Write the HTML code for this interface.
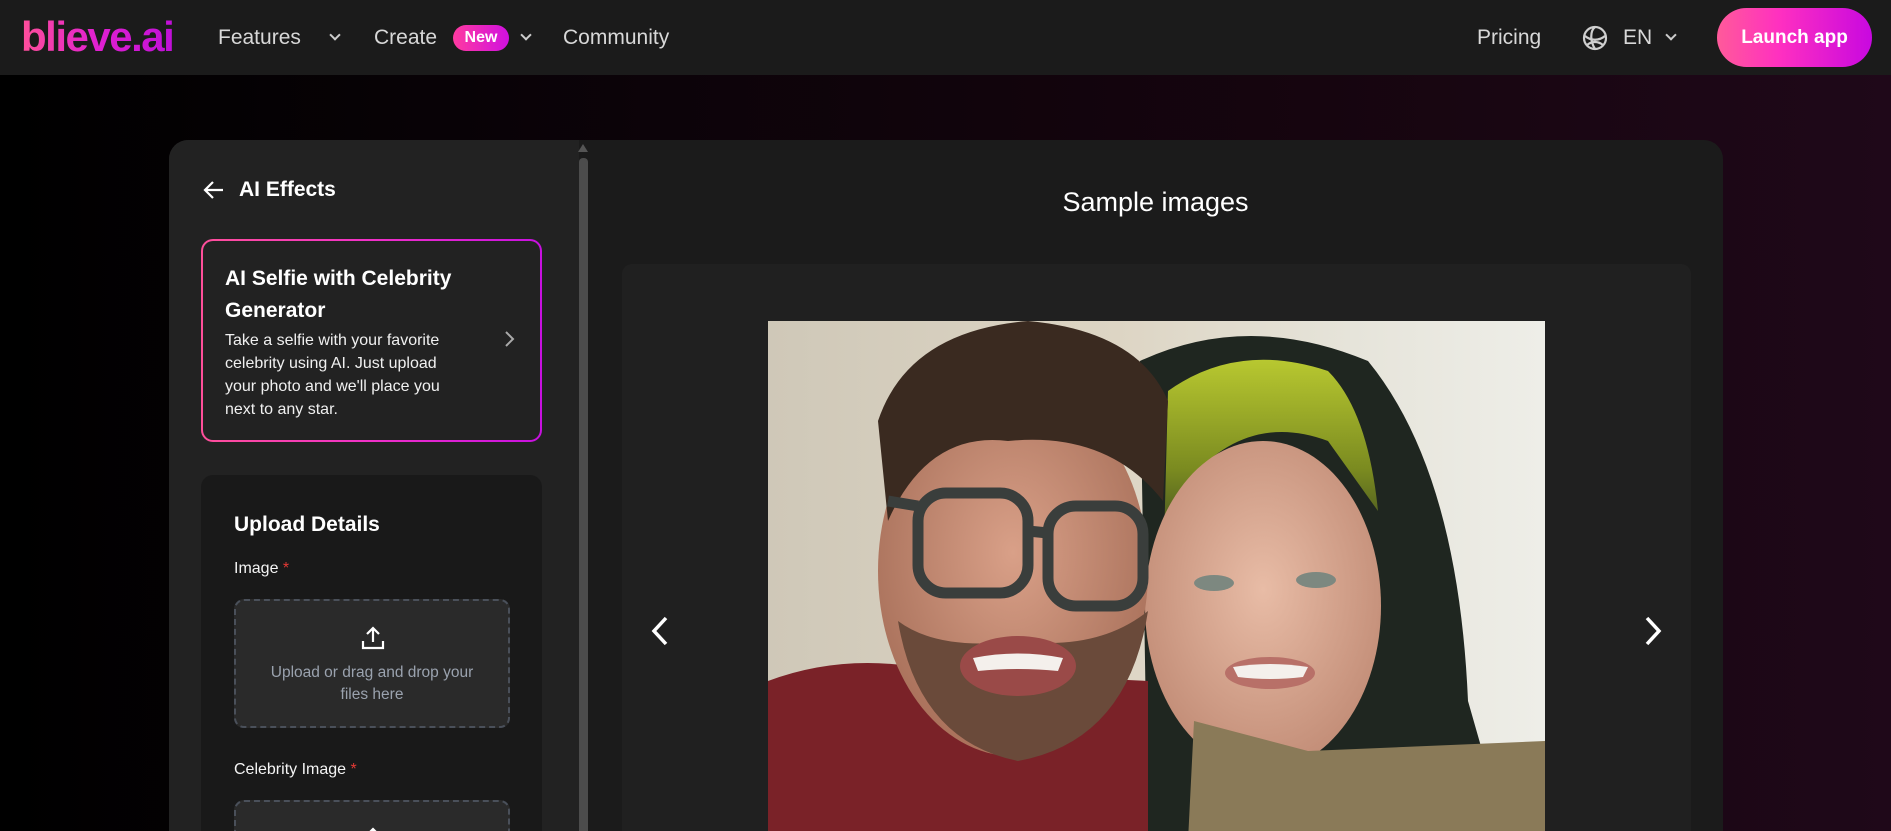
<!DOCTYPE html>
<html><head><meta charset="utf-8"><style>
*{margin:0;padding:0;box-sizing:border-box}
html,body{width:1891px;height:831px;overflow:hidden}
body{font-family:"Liberation Sans",sans-serif;background:linear-gradient(90deg,#000 0%,#0c0309 35%,#16050f 70%,#1f0819 100%);position:relative;color:#fff}
.nav{position:absolute;left:0;top:0;width:1891px;height:75px;background:#1b1b1b}
.logo{position:absolute;left:21px;top:13px;font-size:42px;font-weight:bold;letter-spacing:-1.5px;background:linear-gradient(90deg,#ff4f9a,#e020d0,#c010d8);-webkit-background-clip:text;color:transparent}
.ni{position:absolute;top:26px;font-size:21px;color:#d8d8d8}
.chev{position:absolute;width:8px;height:8px;border-right:2px solid #ccc;border-bottom:2px solid #ccc;transform:rotate(45deg)}
.new{position:absolute;left:453px;top:25px;width:56px;height:26px;border-radius:13px;background:linear-gradient(90deg,#ff3aa0,#d010e0);font-size:16px;font-weight:bold;text-align:center;line-height:26px}
.launch{position:absolute;left:1717px;top:8px;width:155px;height:59px;border-radius:30px;background:linear-gradient(90deg,#ff5a9a,#ff30c0 40%,#c808e0);font-size:19px;font-weight:bold;text-align:center;line-height:59px}
.main{position:absolute;left:169px;top:140px;width:1554px;height:691px;border-radius:19px 19px 0 0;background:#1b1b1b;overflow:hidden}
.left{position:absolute;left:0;top:0;width:410px;height:691px;background:#222}
.sb{position:absolute;left:410px;top:18px;width:9px;height:673px;background:#4c4c4c;border-radius:4px 4px 0 0}
.card{position:absolute;left:32px;top:99px;width:341px;height:203px;border-radius:12px;padding:2px;background:linear-gradient(90deg,#ff4f9a,#f030c8,#c810e0)}
.ci{width:100%;height:100%;background:#222;border-radius:10px;padding:22px 22px}
.ct{font-size:21px;font-weight:bold;line-height:32px}
.cd{font-size:16px;line-height:23px;width:234px;margin-top:2px;color:#f0f0f0}
.up{position:absolute;left:32px;top:335px;width:341px;height:356px;border-radius:12px 12px 0 0;background:#191919;overflow:hidden}
.drop{position:absolute;left:33px;width:276px;height:129px;border:2px dashed #4a505a;border-radius:10px;background:#2a2a2a}
.lbl{position:absolute;left:33px;font-size:16px;color:#f4f4f4}
.lbl b{color:#e53935;font-weight:normal}
.gal{position:absolute;left:453px;top:124px;width:1069px;height:567px;border-radius:10px 10px 0 0;background:#202020;overflow:hidden}
</style></head><body>
<div class="nav">
<div class="logo">blieve.ai</div>
<div class="ni" style="left:218px">Features</div><div class="chev" style="left:331px;top:31px"></div>
<div class="ni" style="left:374px">Create</div><div class="new">New</div><div class="chev" style="left:522px;top:31px"></div>
<div class="ni" style="left:563px">Community</div>
<div class="ni" style="left:1477px">Pricing</div>
<svg style="position:absolute;left:1582px;top:25px" width="26" height="26" viewBox="0 0 26 26" fill="none" stroke="#cfcfcf" stroke-width="2.2"><circle cx="13" cy="13" r="11"/><path d="M13 2c-5 4-5 14 0 22M3 11c6 5 14 5 20 0M5 20c5-4 11-4 16 0"/></svg>
<div class="ni" style="left:1623px">EN</div><div class="chev" style="left:1667px;top:31px"></div>
<div class="launch">Launch app</div>
</div>
<div class="main">
<div class="left">
<svg style="position:absolute;left:34px;top:40px" width="22" height="20" viewBox="0 0 22 20" fill="none" stroke="#fff" stroke-width="2.2"><path d="M20 10H3M10 2 2 10l8 8"/></svg>
<div style="position:absolute;left:70px;top:38px;font-size:21px;font-weight:bold">AI Effects</div>
<div class="card"><div class="ci"><div class="ct">AI Selfie with Celebrity Generator</div><div class="cd">Take a selfie with your favorite celebrity using AI. Just upload your photo and we'll place you next to any star.</div></div>
<svg style="position:absolute;left:303px;top:91px" width="12" height="18" viewBox="0 0 12 18" fill="none" stroke="#aaa" stroke-width="2"><path d="M2 2l7 7-7 7"/></svg></div>
<div class="up">
<div style="position:absolute;left:33px;top:38px;font-size:21px;font-weight:bold">Upload Details</div>
<div class="lbl" style="top:85px">Image <b>*</b></div>
<div class="drop" style="top:124px">
<svg style="position:absolute;left:124px;top:24px" width="26" height="26" viewBox="0 0 26 26" fill="none" stroke="#fff" stroke-width="2.2"><path d="M13 17V3M7 9l6-6 6 6M3 16v7h20v-7"/></svg>
<div style="position:absolute;left:0;top:61px;width:272px;text-align:center;font-size:15.5px;line-height:22px;color:#9aa2ae">Upload or drag and drop your<br>files here</div></div>
<div class="lbl" style="top:286px">Celebrity Image <b>*</b></div>
<div class="drop" style="top:325px"><svg style="position:absolute;left:124px;top:24px" width="26" height="26" viewBox="0 0 26 26" fill="none" stroke="#fff" stroke-width="2.2"><path d="M13 17V3M7 9l6-6 6 6"/></svg></div>
</div>
</div>
<div class="sb"></div>
<div style="position:absolute;left:410px;top:4px;width:0;height:0;border-left:5px solid transparent;border-right:5px solid transparent;border-bottom:8px solid #555;margin-left:-1px"></div>
<div style="position:absolute;left:419px;top:47px;width:1135px;text-align:center;font-size:27px">Sample images</div>
<div class="gal">
<svg style="position:absolute;left:146px;top:57px" width="777" height="510" viewBox="0 0 777 510">
<defs>
<linearGradient id="bg" x1="0" x2="1"><stop offset="0" stop-color="#cfc8b8"/><stop offset=".45" stop-color="#ddd5c4"/><stop offset=".75" stop-color="#e6e4da"/><stop offset="1" stop-color="#eeeee8"/></linearGradient>
<radialGradient id="sk1" cx=".5" cy=".45" r=".6"><stop offset="0" stop-color="#d9a088"/><stop offset="1" stop-color="#a66e58"/></radialGradient>
<radialGradient id="sk2" cx=".5" cy=".45" r=".6"><stop offset="0" stop-color="#e8bca6"/><stop offset="1" stop-color="#c08a74"/></radialGradient>
<linearGradient id="gr" x1="0" y1="0" x2="0" y2="1"><stop offset="0" stop-color="#b8c830"/><stop offset=".5" stop-color="#7a8a20"/><stop offset="1" stop-color="#1e2a22"/></linearGradient>
</defs>
<rect width="777" height="520" fill="url(#bg)"/>
<path d="M372 40 Q480 -10 600 40 Q690 150 700 380 L740 520 L380 520 Z" fill="#1f2620"/>
<path d="M400 70 Q470 20 560 50 Q600 90 610 190 L560 120 Q480 90 420 160 L395 260 Z" fill="url(#gr)"/>
<ellipse cx="495" cy="285" rx="118" ry="165" fill="url(#sk2)"/>
<path d="M426 400 L540 430 L777 420 L777 520 L420 520 Z" fill="#8a7a58"/>
<path d="M0 360 Q80 330 170 350 L380 360 L380 520 L0 520 Z" fill="#7a2228"/>
<ellipse cx="245" cy="250" rx="135" ry="185" fill="url(#sk1)"/>
<path d="M110 100 Q140 10 260 0 Q370 10 400 80 L395 180 Q340 110 240 120 Q160 110 120 200 Z" fill="#3a2a20"/>
<path d="M130 300 Q150 420 250 440 Q360 420 380 290 Q330 330 250 320 Q170 330 130 300 Z" fill="#6a4a3a"/>
<ellipse cx="250" cy="345" rx="58" ry="30" fill="#9a4a48"/>
<path d="M205 337 Q250 328 295 337 L290 350 Q250 346 210 350 Z" fill="#f4f0ec"/>
<ellipse cx="502" cy="352" rx="45" ry="16" fill="#b87068"/>
<path d="M465 346 Q502 340 540 346 L535 356 Q502 360 470 356 Z" fill="#f4f0ec"/>
<g fill="none" stroke="#3a3e3c" stroke-width="11"><rect x="150" y="172" width="110" height="100" rx="28"/><rect x="280" y="185" width="95" height="100" rx="28"/><path d="M260 210 L280 212 M120 180 L150 185"/></g>
<ellipse cx="446" cy="262" rx="20" ry="8" fill="#7d8880"/><ellipse cx="548" cy="259" rx="20" ry="8" fill="#7d8880"/>
</svg>
<svg style="position:absolute;left:28px;top:351px" width="20" height="32" viewBox="0 0 20 32" fill="none" stroke="#fff" stroke-width="3.5"><path d="M16 3 4 16l12 13"/></svg>
<svg style="position:absolute;left:1021px;top:351px" width="20" height="32" viewBox="0 0 20 32" fill="none" stroke="#fff" stroke-width="3.5"><path d="M4 3l12 13L4 29"/></svg>
</div>
</div>
</body></html>
